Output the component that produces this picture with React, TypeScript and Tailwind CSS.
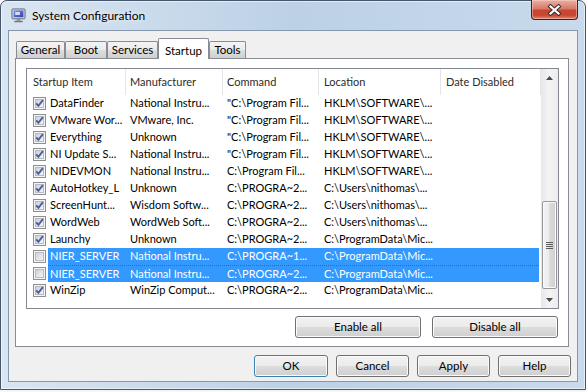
import React from "react";

type Row = { on: boolean; name: string; mfr: string; cmd: string; loc: string; sel?: boolean; focus?: boolean };

const rows: Row[] = [
  { on: true, name: "DataFinder", mfr: "National Instru...", cmd: '"C:\\Program Fil...', loc: "HKLM\\SOFTWARE\\..." },
  { on: true, name: "VMware Wor...", mfr: "VMware, Inc.", cmd: '"C:\\Program Fil...', loc: "HKLM\\SOFTWARE\\..." },
  { on: true, name: "Everything", mfr: "Unknown", cmd: '"C:\\Program Fil...', loc: "HKLM\\SOFTWARE\\..." },
  { on: true, name: "NI Update S...", mfr: "National Instru...", cmd: '"C:\\Program Fil...', loc: "HKLM\\SOFTWARE\\..." },
  { on: true, name: "NIDEVMON", mfr: "National Instru...", cmd: "C:\\Program Fil...", loc: "HKLM\\SOFTWARE\\..." },
  { on: true, name: "AutoHotkey_L", mfr: "Unknown", cmd: "C:\\PROGRA~2...", loc: "C:\\Users\\nithomas\\..." },
  { on: true, name: "ScreenHunt...", mfr: "Wisdom Softw...", cmd: "C:\\PROGRA~2...", loc: "C:\\Users\\nithomas\\..." },
  { on: true, name: "WordWeb", mfr: "WordWeb Soft...", cmd: "C:\\PROGRA~2...", loc: "C:\\Users\\nithomas\\..." },
  { on: true, name: "Launchy", mfr: "Unknown", cmd: "C:\\PROGRA~2...", loc: "C:\\ProgramData\\Mic..." },
  { on: false, name: "NIER_SERVER", mfr: "National Instru...", cmd: "C:\\PROGRA~1...", loc: "C:\\ProgramData\\Mic...", sel: true },
  { on: false, name: "NIER_SERVER", mfr: "National Instru...", cmd: "C:\\PROGRA~2...", loc: "C:\\ProgramData\\Mic...", sel: true, focus: true },
  { on: true, name: "WinZip", mfr: "WinZip Comput...", cmd: "C:\\PROGRA~2...", loc: "C:\\ProgramData\\Mic..." },
];

// classic aero push button
const btn =
  "h-[22px] rounded-[3px] border border-[#707070] bg-[linear-gradient(#f2f2f2_0%,#ebebeb_50%,#dddddd_50%,#cfcfcf_100%)] shadow-[inset_0_0_0_1px_#fbfbfb] text-[11.5px] text-black";

function Check({ on }: { on: boolean }) {
  return (
    <svg width="13" height="13" viewBox="0 0 13 13" className="shrink-0">
      <defs>
        <linearGradient id={on ? "cbOn" : "cbOff"} x1="0" y1="0" x2="1" y2="1">
          <stop offset="0" stopColor="#cbcfd5" />
          <stop offset="1" stopColor="#f7f7f7" />
        </linearGradient>
      </defs>
      <rect x="0.5" y="0.5" width="12" height="12" fill="#f4f4f4" stroke="#8e8f8f" />
      <rect x="2.5" y="2.5" width="8" height="8" fill={`url(#${on ? "cbOn" : "cbOff"})`} stroke="#b6bbc2" />
      {on && <path d="M3.2 6.3 L5.4 8.8 L9.9 3.2" fill="none" stroke="#4a5f9a" strokeWidth="1.9" />}
    </svg>
  );
}

function Tab({ label, w, active }: { label: string; w: string; active?: boolean }) {
  if (active)
    return (
      <div className={`${w} h-[21px] -mb-px relative z-10 flex items-start justify-center pt-[3px] rounded-t-[2px] border border-b-0 border-[#898c95] bg-white`}>
        {label}
      </div>
    );
  return (
    <div className={`${w} h-[17px] flex items-center justify-center rounded-t-[2px] border border-b-0 border-[#898c95] bg-[linear-gradient(#f3f3f3_0%,#ebebeb_50%,#dedede_50%,#d0d0d0_100%)]`}>
      {label}
    </div>
  );
}

export default function App() {
  return (
    <div className="w-[586px] h-[392px] overflow-hidden bg-[#f4f6f8] font-['Lato','Liberation_Sans',Arial,sans-serif] text-[11px] text-black">
      <div className="h-[390px] flex flex-col rounded-t-[7px] border border-[#47566a] bg-gradient-to-r from-[#d9e5f1] via-[#bcd1e6] to-[#c8daec] shadow-[inset_0_0_0_1px_rgba(255,255,255,0.55)] px-[7px] pb-[7px]">
        {/* title bar */}
        <div className="h-[29px] flex items-start">
          <svg width="15" height="15" viewBox="0 0 16 16" className="ml-[3px] mt-[7px]">
            <defs>
              <linearGradient id="scr" x1="0" y1="0" x2="1" y2="1">
                <stop offset="0" stopColor="#7a8ff0" />
                <stop offset="1" stopColor="#2b3fae" />
              </linearGradient>
            </defs>
            <rect x="1" y="1" width="14" height="10.5" rx="1" fill="#d3d6dc" stroke="#5f6670" />
            <rect x="2.8" y="2.6" width="10.4" height="7.2" fill="url(#scr)" />
            <path d="M4.5 4.2 H9.5 V7.5 H4.5 Z" fill="#e9edf7" opacity="0.85" />
            <rect x="6" y="11.5" width="4" height="2" fill="#8b919b" />
            <rect x="3.5" y="13.5" width="9" height="1.8" rx="0.6" fill="#6d747e" />
          </svg>
          <span className="ml-[6px] mt-[7px] text-[12px] leading-[15px] [text-shadow:0_0_6px_#ffffff]">System Configuration</span>
          <div className="flex-1" />
          <div className="w-[47px] h-[20px] -mt-px flex items-center justify-center rounded-b-[4px] border border-t-0 border-[#4f1a12] bg-[linear-gradient(#eab0a2_0%,#d97a68_45%,#c74633_55%,#c9472f_80%,#e0866a_100%)] shadow-[inset_0_0_0_1px_rgba(255,220,210,0.45)]">
            <svg width="15" height="12" viewBox="0 0 15 12">
              <path d="M3.5 2.5 L11.5 9.5 M11.5 2.5 L3.5 9.5" stroke="#3b3030" strokeWidth="4.2" strokeLinecap="square" />
              <path d="M3.5 2.5 L11.5 9.5 M11.5 2.5 L3.5 9.5" stroke="#ffffff" strokeWidth="2.2" strokeLinecap="square" />
            </svg>
          </div>
        </div>

        {/* client area */}
        <div className="flex-1 flex flex-col border border-[#8497ad] bg-[#f0f0f0]">
          {/* tabs */}
          <div className="flex items-end h-[27px] pl-[7px] pt-[6px] text-[11.5px]">
            <Tab label="General" w="w-[49px]" />
            <Tab label="Boot" w="w-[42px]" />
            <Tab label="Services" w="w-[51px]" />
            <Tab label="Startup" w="w-[51px]" active />
            <Tab label="Tools" w="w-[37px]" />
          </div>

          {/* tab page */}
          <div className="ml-[6px] mr-[8px] h-[289px] flex flex-col border border-[#898c95] bg-white pt-[9px] pl-[10px] pr-[9px]">
            <div className="h-[241px] flex border border-[#828790] bg-white">
              <div className="flex-1 flex flex-col">
                <div className="h-[26px] flex text-[#2b2b2b]">
                  <div className="w-[99px] flex items-center pl-[6px] border-r border-[#e3e5e8]">Startup Item</div>
                  <div className="w-[97px] flex items-center pl-[4px] border-r border-[#e3e5e8]">Manufacturer</div>
                  <div className="w-[96px] flex items-center pl-[4px] border-r border-[#e3e5e8]">Command</div>
                  <div className="w-[122px] flex items-center pl-[5px] border-r border-[#e3e5e8]">Location</div>
                  <div className="flex-1 flex items-center pl-[5px] border-r border-[#e3e5e8]">Date Disabled</div>
                </div>
                {rows.map((r, i) => (
                  <div key={i} className="h-[17px] flex items-center whitespace-nowrap">
                    <div className="pl-[6px] pr-[2px] flex items-center">
                      <Check on={r.on} />
                    </div>
                    <div
                      className={`h-[17px] flex-1 mr-[2px] flex items-center box-border ${
                        r.sel ? "bg-[#3399ff] text-white" : ""
                      } ${r.focus ? "border-t border-dotted border-[#1f6fcf]" : ""}`}
                    >
                      <div className="w-[78px] pl-[2px] overflow-hidden">{r.name}</div>
                      <div className="w-[97px] pl-[4px] overflow-hidden">{r.mfr}</div>
                      <div className="w-[96px] pl-[4px] overflow-hidden">{r.cmd}</div>
                      <div className="w-[122px] pl-[5px] overflow-hidden">{r.loc}</div>
                      <div className="flex-1" />
                    </div>
                  </div>
                ))}
              </div>

              {/* scrollbar */}
              <div className="w-[17px] flex flex-col bg-gradient-to-r from-[#e7e7e7] via-[#f4f4f4] to-[#ececec]">
                <div className="h-[17px] flex items-center justify-center">
                  <svg width="7" height="4" viewBox="0 0 7 4">
                    <path d="M0 4 L3.5 0 L7 4 Z" fill="#4a4a4a" />
                  </svg>
                </div>
                <div className="flex-1" />
                <div className="mx-px h-[88px] flex items-center justify-center rounded-[2px] border border-[#979797] bg-[linear-gradient(90deg,#f3f3f3_0%,#ececec_50%,#dcdcdc_50%,#cfcfcf_100%)] shadow-[inset_0_0_0_1px_#fafafa]">
                  <div className="flex flex-col gap-[1px]">
                    <div className="w-[7px] h-px bg-[#5b5b5b]" />
                    <div className="w-[7px] h-px bg-[#5b5b5b]" />
                    <div className="w-[7px] h-px bg-[#5b5b5b]" />
                    <div className="w-[7px] h-px bg-[#5b5b5b]" />
                  </div>
                </div>
                <div className="h-[2px]" />
                <div className="h-[17px] flex items-center justify-center">
                  <svg width="7" height="4" viewBox="0 0 7 4">
                    <path d="M0 0 L3.5 4 L7 0 Z" fill="#4a4a4a" />
                  </svg>
                </div>
              </div>
            </div>

            <div className="mt-[7px] mr-px flex justify-end gap-[11px]">
              <button className={`${btn} w-[126px]`}>Enable all</button>
              <button className={`${btn} w-[126px]`}>Disable all</button>
            </div>
          </div>

          {/* dialog buttons */}
          <div className="mt-[8px] mr-[6px] flex justify-end gap-[8px]">
            <button className={`${btn} w-[74px] !border-[#3c7fb1] shadow-[inset_0_0_0_1px_#9fd8f6]`}>OK</button>
            <button className={`${btn} w-[73px]`}>Cancel</button>
            <button className={`${btn} w-[73px]`}>Apply</button>
            <button className={`${btn} w-[73px]`}>Help</button>
          </div>
        </div>
      </div>
    </div>
  );
}
